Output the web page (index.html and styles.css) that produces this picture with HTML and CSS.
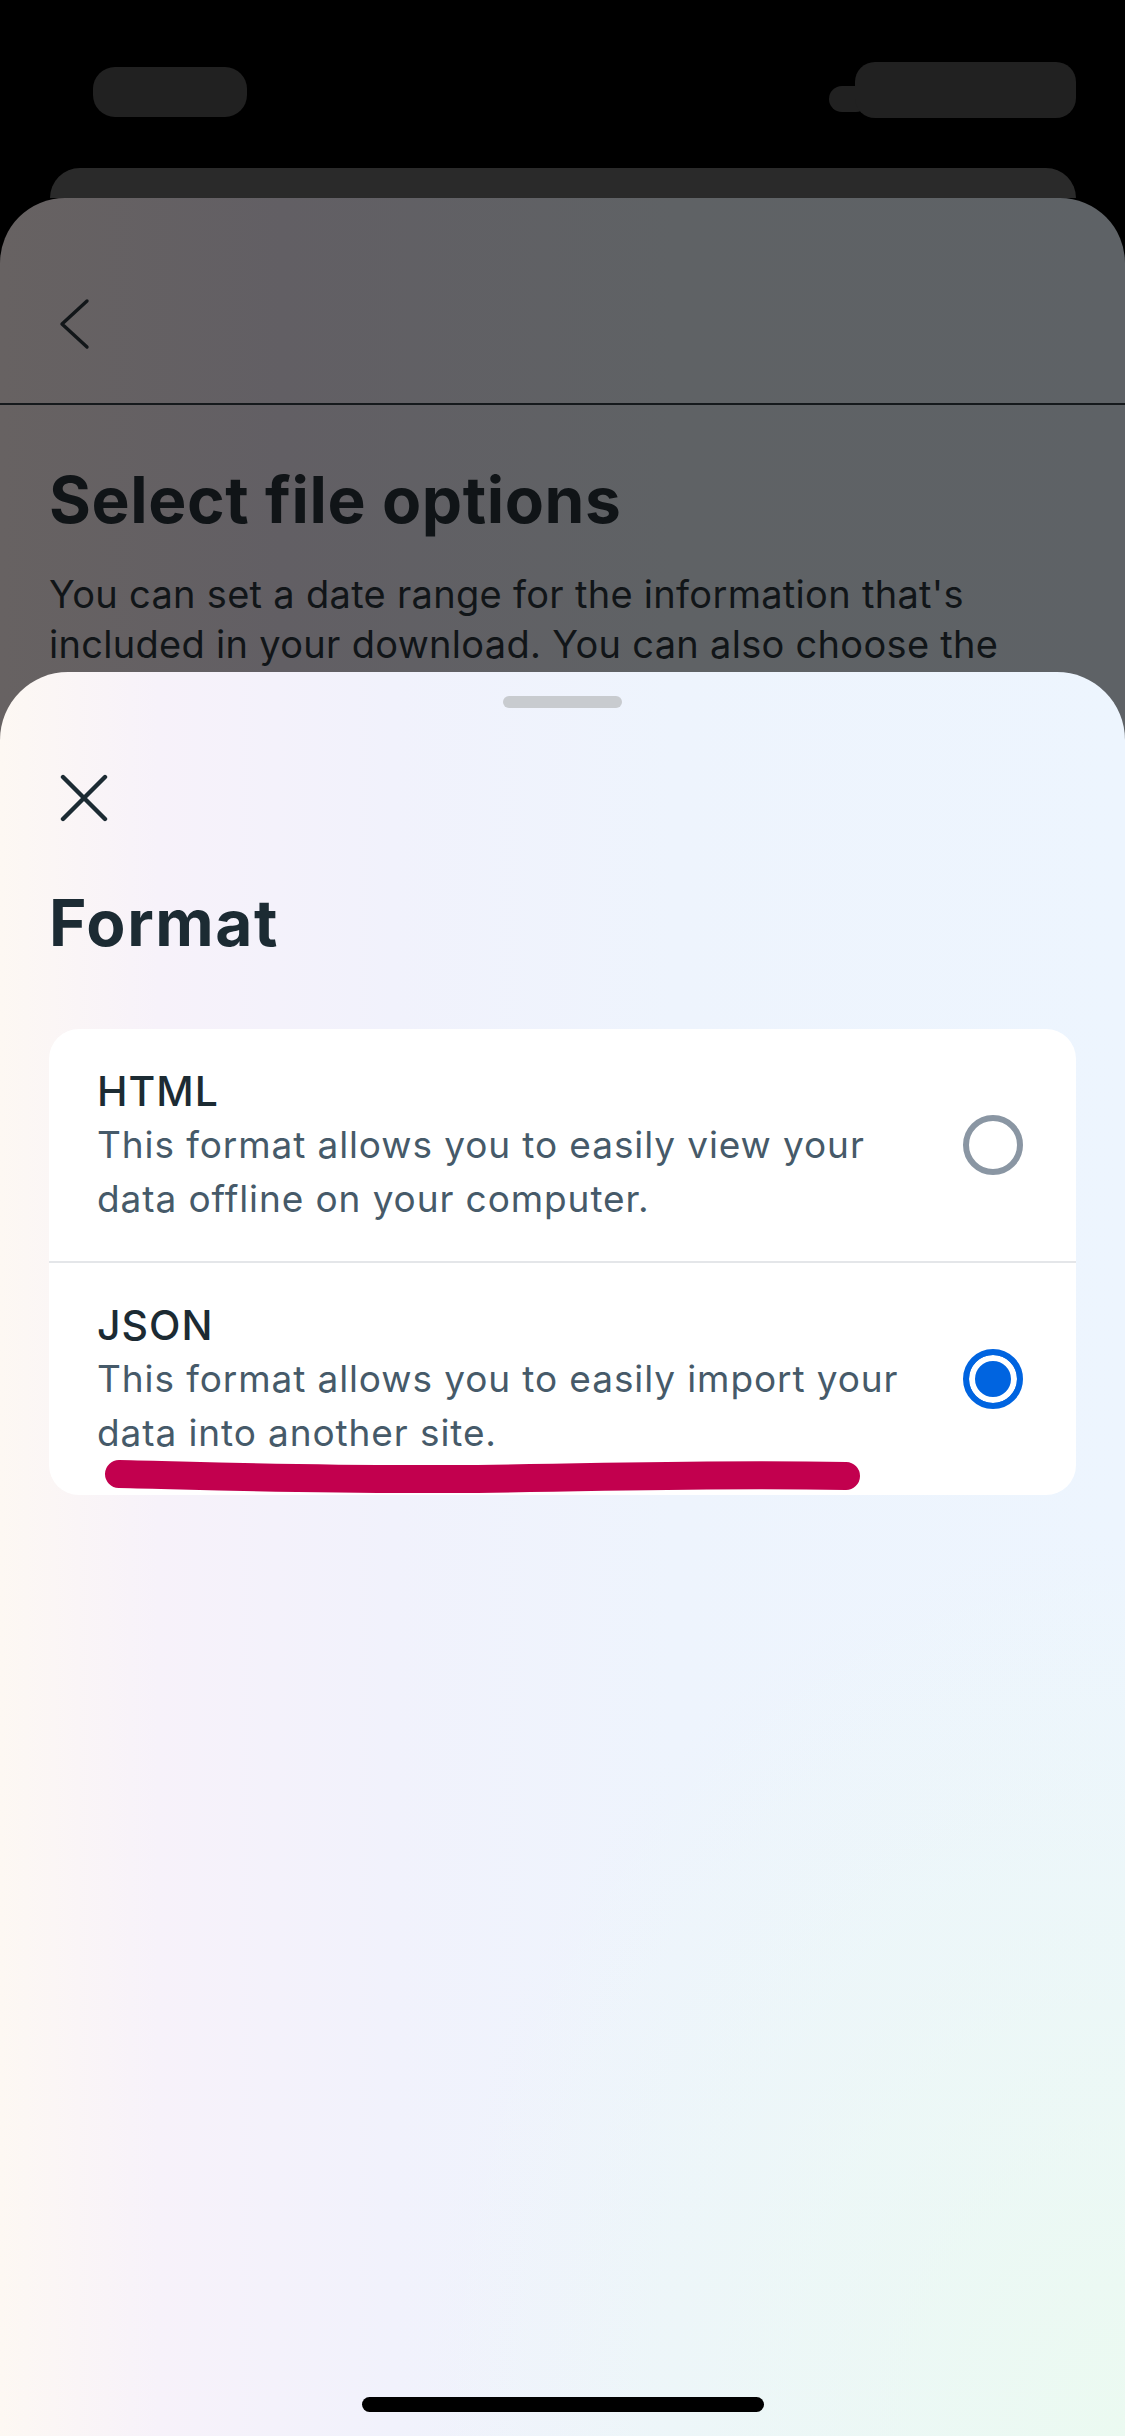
FILE: index.html
```html
<!DOCTYPE html>
<html lang="en">
<head>
<meta charset="utf-8">
<title>Select file options – Format</title>
<link rel="stylesheet" href="styles.css">
</head>
<body>
<div class="screen">
  <div class="status">
    <div class="blob-l"></div>
    <div class="blob-r"><div class="bump"></div><div class="main"></div></div>
  </div>
  <div class="back-card"></div>
  <div class="page">
    <div class="page-header">
      <svg class="chevron" width="32" height="52" viewBox="0 0 32 52"><path d="M29 3 L4 26 L29 49" fill="none" stroke="#121619" stroke-width="3.4" stroke-linecap="round" stroke-linejoin="round"/></svg>
    </div>
    <h1 class="page-title">Select file options</h1>
    <p class="page-text">You can set a date range for the information that's included in your download. You can also choose the format of your download and the quality of photos, videos and other media.</p>
  </div>

  <div class="sheet">
    <div class="handle"></div>
    <svg class="close" width="48" height="48" viewBox="0 0 48 48"><path d="M3 3 L45 45 M45 3 L3 45" fill="none" stroke="#1c2b33" stroke-width="4.4" stroke-linecap="round"/></svg>
    <h2 class="sheet-title">Format</h2>
    <div class="card">
      <div class="option">
        <div class="text">
          <div class="label">HTML</div>
          <div class="desc">This format allows you to easily view your data offline on your computer.</div>
        </div>
        <div class="radio"></div>
      </div>
      <div class="option">
        <div class="text">
          <div class="label">JSON</div>
          <div class="desc">This format allows you to easily import your data into another site.</div>
        </div>
        <div class="radio on"></div>
      </div>
      <svg class="scribble" width="1027" height="480" viewBox="0 0 1027 480"><path d="M70 445 C 160 447, 260 451, 400 450 C 560 449, 650 444, 797 447" fill="none" stroke="#c2004e" stroke-width="28" stroke-linecap="round"/></svg>
    </div>
    <div class="home"></div>
  </div>
</div>
</body>
</html>
```
FILE: styles.css
```css
* { box-sizing: border-box; }
html, body { margin: 0; padding: 0; }
body {
  width: 1125px;
  height: 2436px;
  overflow: hidden;
  background: #000;
  font-family: Inter, "Noto Sans", "Liberation Sans", sans-serif;
}
.screen { position: relative; width: 1125px; height: 2436px; overflow: hidden; }

.status {
  height: 168px;
  display: flex;
  justify-content: space-between;
  align-items: flex-start;
  padding: 62px 49px 0 93px;
}
.blob-l { width: 154px; height: 50px; margin-top: 5px; background: #212121; border-radius: 22px; }
.blob-r { display: flex; align-items: flex-end; }
.blob-r .bump { width: 40px; height: 26px; margin-right: -14px; margin-bottom: 6px; background: #212121; border-radius: 13px; }
.blob-r .main { width: 221px; height: 56px; background: #212121; border-radius: 20px; }

.back-card {
  height: 30px;
  margin: 0 49px 0 50px;
  background: #2a2a2a;
  border-radius: 40px 40px 0 0;
}

.page {
  height: 2238px;
  border-radius: 65px 65px 0 0;
  background: linear-gradient(to right, #676262 0%, #625f64 25%, #5f6265 60%, #5e6266 100%);
  overflow: hidden;
}
.page-header {
  height: 207px;
  border-bottom: 2px solid #15191c;
  padding: 100px 0 0 58px;
}
.chevron { display: block; }
.page-title {
  margin: 56px 49px 0;
  font-size: 64px;
  line-height: 77px;
  font-weight: 700;
  color: #101417;
  letter-spacing: 0.6px;
}
.page-text {
  margin: 31px 49px 0;
  font-size: 38px;
  line-height: 50px;
  color: #111518;
  letter-spacing: 0.3px;
}

.sheet {
  position: absolute;
  top: 672px;
  left: 0;
  width: 1125px;
  height: 1764px;
  border-radius: 68px 68px 0 0;
  background:
    radial-gradient(ellipse 700px 900px at 100% 100%, rgba(235, 250, 240, 0.95) 0%, rgba(235, 250, 240, 0) 100%),
    linear-gradient(to right, #fdf8f3 0%, #f7f2fa 14%, #f1f2fc 35%, #eef4fd 60%, #edf5fe 100%);
  display: flex;
  flex-direction: column;
}
.handle { width: 119px; height: 12px; margin: 24px auto 0; border-radius: 6px; background: #c8cbcf; }
.close { display: block; margin: 66px 0 0 60px; }
.sheet-title {
  margin: 62px 49px 0;
  font-size: 64px;
  line-height: 77px;
  font-weight: 700;
  color: #1c2b33;
  letter-spacing: 1.6px;
}
.card {
  position: relative;
  margin: 68px 49px 0;
  background: #fff;
  border-radius: 30px;
}
.option {
  display: flex;
  align-items: center;
  gap: 40px;
  padding: 35px 53px 35px 48px;
}
.option + .option { border-top: 2px solid #e4e6e9; }
.text { flex: 1; }
.label { font-size: 41px; line-height: 54px; font-weight: 500; color: #1c2b33; letter-spacing: 1px; }
.desc { font-size: 37px; line-height: 54px; color: #465a69; letter-spacing: 0.9px; }
.radio {
  flex-shrink: 0;
  width: 60px;
  height: 60px;
  border-radius: 50%;
  border: 6px solid #8a96a3;
  background: #fff;
}
.radio.on {
  border-color: #0064e0;
  background: #0064e0;
  box-shadow: inset 0 0 0 6px #fff;
}
.scribble { position: absolute; left: 0; top: 0; overflow: visible; pointer-events: none; }
.home {
  position: absolute;
  bottom: 24px;
  left: 50%;
  margin-left: -201px;
  width: 402px;
  height: 15px;
  border-radius: 8px;
  background: #000;
}
```
